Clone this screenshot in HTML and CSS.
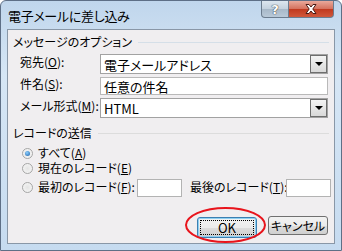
FILE: index.html
```html
<!DOCTYPE html>
<html lang="ja">
<head>
  <meta charset="UTF-8" />
  <title>電子メールに差し込み</title>
  <link rel="stylesheet" href="styles.css">
</head>
<body>
  <div class="window">
    <div class="titlebar">
      <span class="title">電子メールに差し込み</span>
      <div class="caption-buttons">
        <span class="btn-help">?</span>
        <span class="btn-close">
          <svg width="16" height="12" viewBox="0 0 16 12">
            <path d="M3 1.5 L6 1.5 L8 4 L10 1.5 L13 1.5 L9.8 6 L13 10.5 L10 10.5 L8 8 L6 10.5 L3 10.5 L6.2 6 Z" fill="#fff" stroke="#4a1a14" stroke-width="1" stroke-linejoin="round"/>
          </svg>
        </span>
      </div>
    </div>

    <div class="client">
      <div class="group-title">メッセージのオプション</div>
      <div class="form-rows">
        <label>宛先(<u>O</u>):</label>
        <div class="combo"><span>電子メールアドレス</span><span class="drop"></span></div>
        <label>件名(<u>S</u>):</label>
        <div class="textbox">任意の件名</div>
        <label>メール形式(<u>M</u>):</label>
        <div class="combo"><span>HTML</span><span class="drop"></span></div>
      </div>

      <div class="group-title second">レコードの送信</div>
      <div class="radios">
        <div class="radio-row"><span class="radio checked"></span><span>すべて(<u>A</u>)</span></div>
        <div class="radio-row"><span class="radio"></span><span>現在のレコード(<u>E</u>)</span></div>
        <div class="radio-row range">
          <span class="radio"></span>
          <span class="first-label">最初のレコード(<u>F</u>):</span>
          <span class="small-box"></span>
          <span class="last-label">最後のレコード(<u>T</u>):</span>
          <span class="small-box"></span>
        </div>
      </div>

      <div class="buttons">
        <button class="btn default"><span class="focus">OK</span></button>
        <button class="btn">キャンセル</button>
      </div>
    </div>

    <div class="highlight"></div>
  </div>
</body>
</html>
```

FILE: styles.css
```css
body {
  margin: 0;
  font-family: "Noto Sans CJK JP", "Noto Sans", sans-serif;
  font-size: 12px;
  font-feature-settings: "palt";
  color: #000;
  background: #fff;
}

.window {
  position: relative;
  width: 342px;
  height: 251px;
  box-sizing: border-box;
  border: 1px solid #5e6f86;
  border-radius: 6px 6px 0 0;
  background: linear-gradient(to bottom, #c0d6ec 0%, #d6e6f5 30%, #c6dbf0 100%);
  display: flex;
  flex-direction: column;
}

.titlebar {
  height: 28px;
  flex-shrink: 0;
  display: flex;
  justify-content: space-between;
  align-items: flex-start;
}

.title {
  margin: 7px 0 0 7px;
  font-size: 13px;
  line-height: 16px;
  letter-spacing: -0.3px;
}

.caption-buttons {
  display: flex;
  margin-right: 7px;
}

.btn-help,
.btn-close {
  height: 17px;
  display: flex;
  align-items: center;
  justify-content: center;
  box-sizing: border-box;
  border: 1px solid #6b7c8e;
  border-top: none;
}

.btn-help {
  width: 28px;
  border-radius: 0 0 0 4px;
  background: linear-gradient(to bottom, #dce6ef 0%, #c3d1de 50%, #a7b8c8 51%, #b9c9d8 100%);
  color: #fff;
  font-family: "DejaVu Sans", sans-serif;
  font-weight: bold;
  font-size: 13px;
  text-shadow: 0 0 1px #333, 0 0 1px #333;
}

.btn-close {
  width: 45px;
  border-left: none;
  border-radius: 0 0 4px 0;
  background: linear-gradient(to bottom, #e9a99b 0%, #d4705c 50%, #c0391f 51%, #d0583b 100%);
}

.client {
  flex: 1;
  margin: 0 6px 6px 6px;
  border: 1px solid #8997a7;
  background: #f0eef0;
  position: relative;
}

.group-title {
  display: flex;
  align-items: center;
  margin: 5px 5px 0 5px;
  height: 14px;
  line-height: 14px;
  white-space: nowrap;
}

.group-title::after {
  content: "";
  flex: 1;
  height: 1px;
  margin-left: 6px;
  background: #d5dfe8;
}

.group-title.second {
  margin-top: 8px;
}

.group-title.second::after {
  background: #dcdcdc;
}

.form-rows {
  display: grid;
  grid-template-columns: 80px 228px;
  grid-template-rows: 20px 18px 20px;
  row-gap: 3px;
  margin: 5px 0 0 12px;
  align-items: center;
}

.form-rows label {
  line-height: 14px;
  margin-top: -4px;
  white-space: nowrap;
}

.combo,
.textbox {
  height: 100%;
  box-sizing: border-box;
  border: 1px solid #a2a2a2;
  background: #fff;
  display: flex;
  align-items: center;
  padding-left: 3px;
  font-size: 13px;
}

.textbox {
  border-color: #b9b9b9;
}

.combo span:first-child {
  flex: 1;
}

.drop {
  width: 17px;
  height: 18px;
  box-sizing: border-box;
  border: 1px solid #6e6e6e;
  background: linear-gradient(to bottom, #f4f4f4, #d9d9d9);
  display: flex;
  align-items: center;
  justify-content: center;
}

.drop::after {
  content: "";
  border-left: 4px solid transparent;
  border-right: 4px solid transparent;
  border-top: 4px solid #000;
}

.radios {
  margin: 6px 0 0 14px;
  display: flex;
  flex-direction: column;
}

.radio-row {
  display: flex;
  align-items: center;
  height: 14px;
  line-height: 14px;
  white-space: nowrap;
}

.radio-row + .radio-row {
  margin-top: 1px;
}

.radio-row.range {
  height: 19px;
  margin-top: 5px;
  align-items: flex-start;
}

.radio-row.range .radio {
  margin-top: 2px;
}

.radio {
  flex-shrink: 0;
  width: 11px;
  height: 11px;
  box-sizing: border-box;
  border: 1px solid #a6a6a6;
  border-radius: 50%;
  background: radial-gradient(circle at 50% 50%, #e4e4e4, #f8f8f8);
  margin-right: 5px;
  position: relative;
}

.radio.checked::after {
  content: "";
  position: absolute;
  left: 2px;
  top: 2px;
  width: 5px;
  height: 5px;
  border-radius: 50%;
  background: radial-gradient(circle at 40% 35%, #8ed0ff, #1a5fa8);
}

.first-label {
  width: 99px;
}

.small-box {
  flex-shrink: 0;
  width: 45px;
  height: 18px;
  box-sizing: border-box;
  border: 1px solid #b3b3b3;
  background: #fff;
  margin-top: -1px;
}

.last-label {
  width: 96px;
  margin-left: 8px;
}

.buttons {
  display: flex;
  justify-content: flex-end;
  gap: 11px;
  margin: 17px 6px 0 0;
}

.btn {
  width: 60px;
  height: 19px;
  padding: 0;
  box-sizing: border-box;
  border: 1px solid #707070;
  border-radius: 3px;
  background: linear-gradient(to bottom, #f2f2f2 0%, #ebebeb 50%, #dddddd 51%, #cfcfcf 100%);
  font-family: inherit;
  font-size: 12px;
  font-feature-settings: "palt";
  color: #000;
}

.btn.default {
  height: 21px;
  margin-top: 1px;
  border-color: #3c7fb1;
  box-shadow: inset 0 0 0 1px #8fd0f2;
  padding: 2px;
}

.focus {
  display: flex;
  align-items: center;
  justify-content: center;
  height: 100%;
  border: 1px dotted #000;
  box-sizing: border-box;
  font-size: 13px;
}

.highlight {
  position: absolute;
  left: 184px;
  top: 206px;
  width: 81px;
  height: 36px;
  box-sizing: border-box;
  border: 2px solid #e8141c;
  border-radius: 50%;
}
```
